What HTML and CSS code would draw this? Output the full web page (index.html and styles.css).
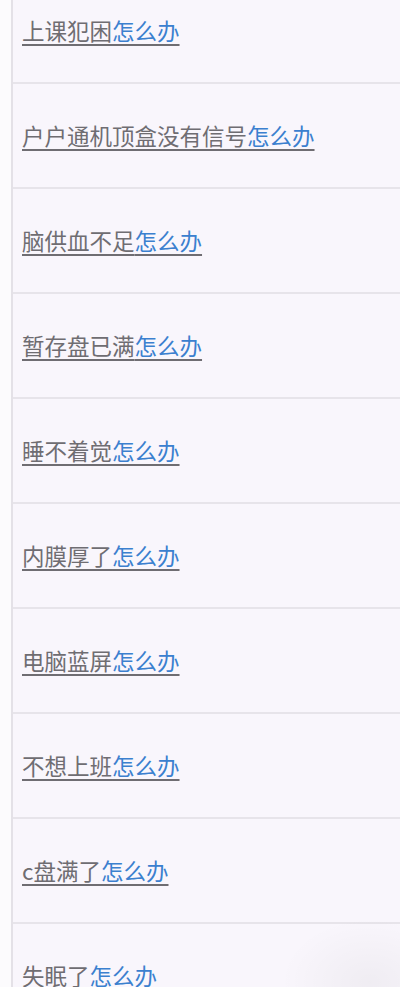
FILE: index.html
```html
<!DOCTYPE html>
<html lang="zh-CN">
  <head>
    <meta charset="UTF-8" />
    <meta name="viewport" content="width=device-width, initial-scale=1.0" />
    <title>怎么办</title>
    <link rel="stylesheet" href="styles.css">
  </head>
  <body>
    <div class="page">
      <ul class="q_list">
        <li><a href="#">上课犯困<span class="hl">怎么办</span></a></li>
        <li><a href="#">户户通机顶盒没有信号<span class="hl">怎么办</span></a></li>
        <li><a href="#">脑供血不足<span class="hl">怎么办</span></a></li>
        <li><a href="#">暂存盘已满<span class="hl">怎么办</span></a></li>
        <li><a href="#">睡不着觉<span class="hl">怎么办</span></a></li>
        <li><a href="#">内膜厚了<span class="hl">怎么办</span></a></li>
        <li><a href="#">电脑蓝屏<span class="hl">怎么办</span></a></li>
        <li><a href="#">不想上班<span class="hl">怎么办</span></a></li>
        <li><a href="#">c盘满了<span class="hl">怎么办</span></a></li>
        <li><a href="#">失眠了<span class="hl">怎么办</span></a></li>
      </ul>
    </div>
  </body>
</html>
```

FILE: styles.css
```css
* {
  margin: 0;
  padding: 0;
}

html,
body {
  height: 100%;
  overflow: hidden;
}

body {
  background-color: #fcfbfd;
  font-family: "Noto Sans CJK SC", "Noto Sans", sans-serif;
}

li {
  list-style-type: none;
}

.page {
  position: relative;
  overflow: hidden;
  margin-left: 11px;
  height: 100%;
  border-left: 2px solid #e4e1e7;
  background-color: #f9f6fc;
}

/* faint shadow of a floating button at bottom right */
.page::after {
  content: "";
  position: absolute;
  right: -60px;
  bottom: -60px;
  width: 180px;
  height: 130px;
  background: radial-gradient(ellipse at center, rgba(0, 0, 0, 0.04), rgba(0, 0, 0, 0) 70%);
}

.q_list {
  margin-top: -21px;
}

.q_list li {
  display: flex;
  align-items: center;
  height: 101px;
  padding-left: 9px;
  padding-bottom: 2px;
  border-bottom: 2px solid #e7e4ea;
}

.q_list a {
  font-size: 22.5px;
  line-height: 30px;
  color: #6f6d72;
  text-decoration: underline;
  text-decoration-color: #6f6d72;
  text-decoration-thickness: 2px;
  text-underline-offset: 4px;
}

.q_list .hl {
  color: #3b80cf;
}
```
